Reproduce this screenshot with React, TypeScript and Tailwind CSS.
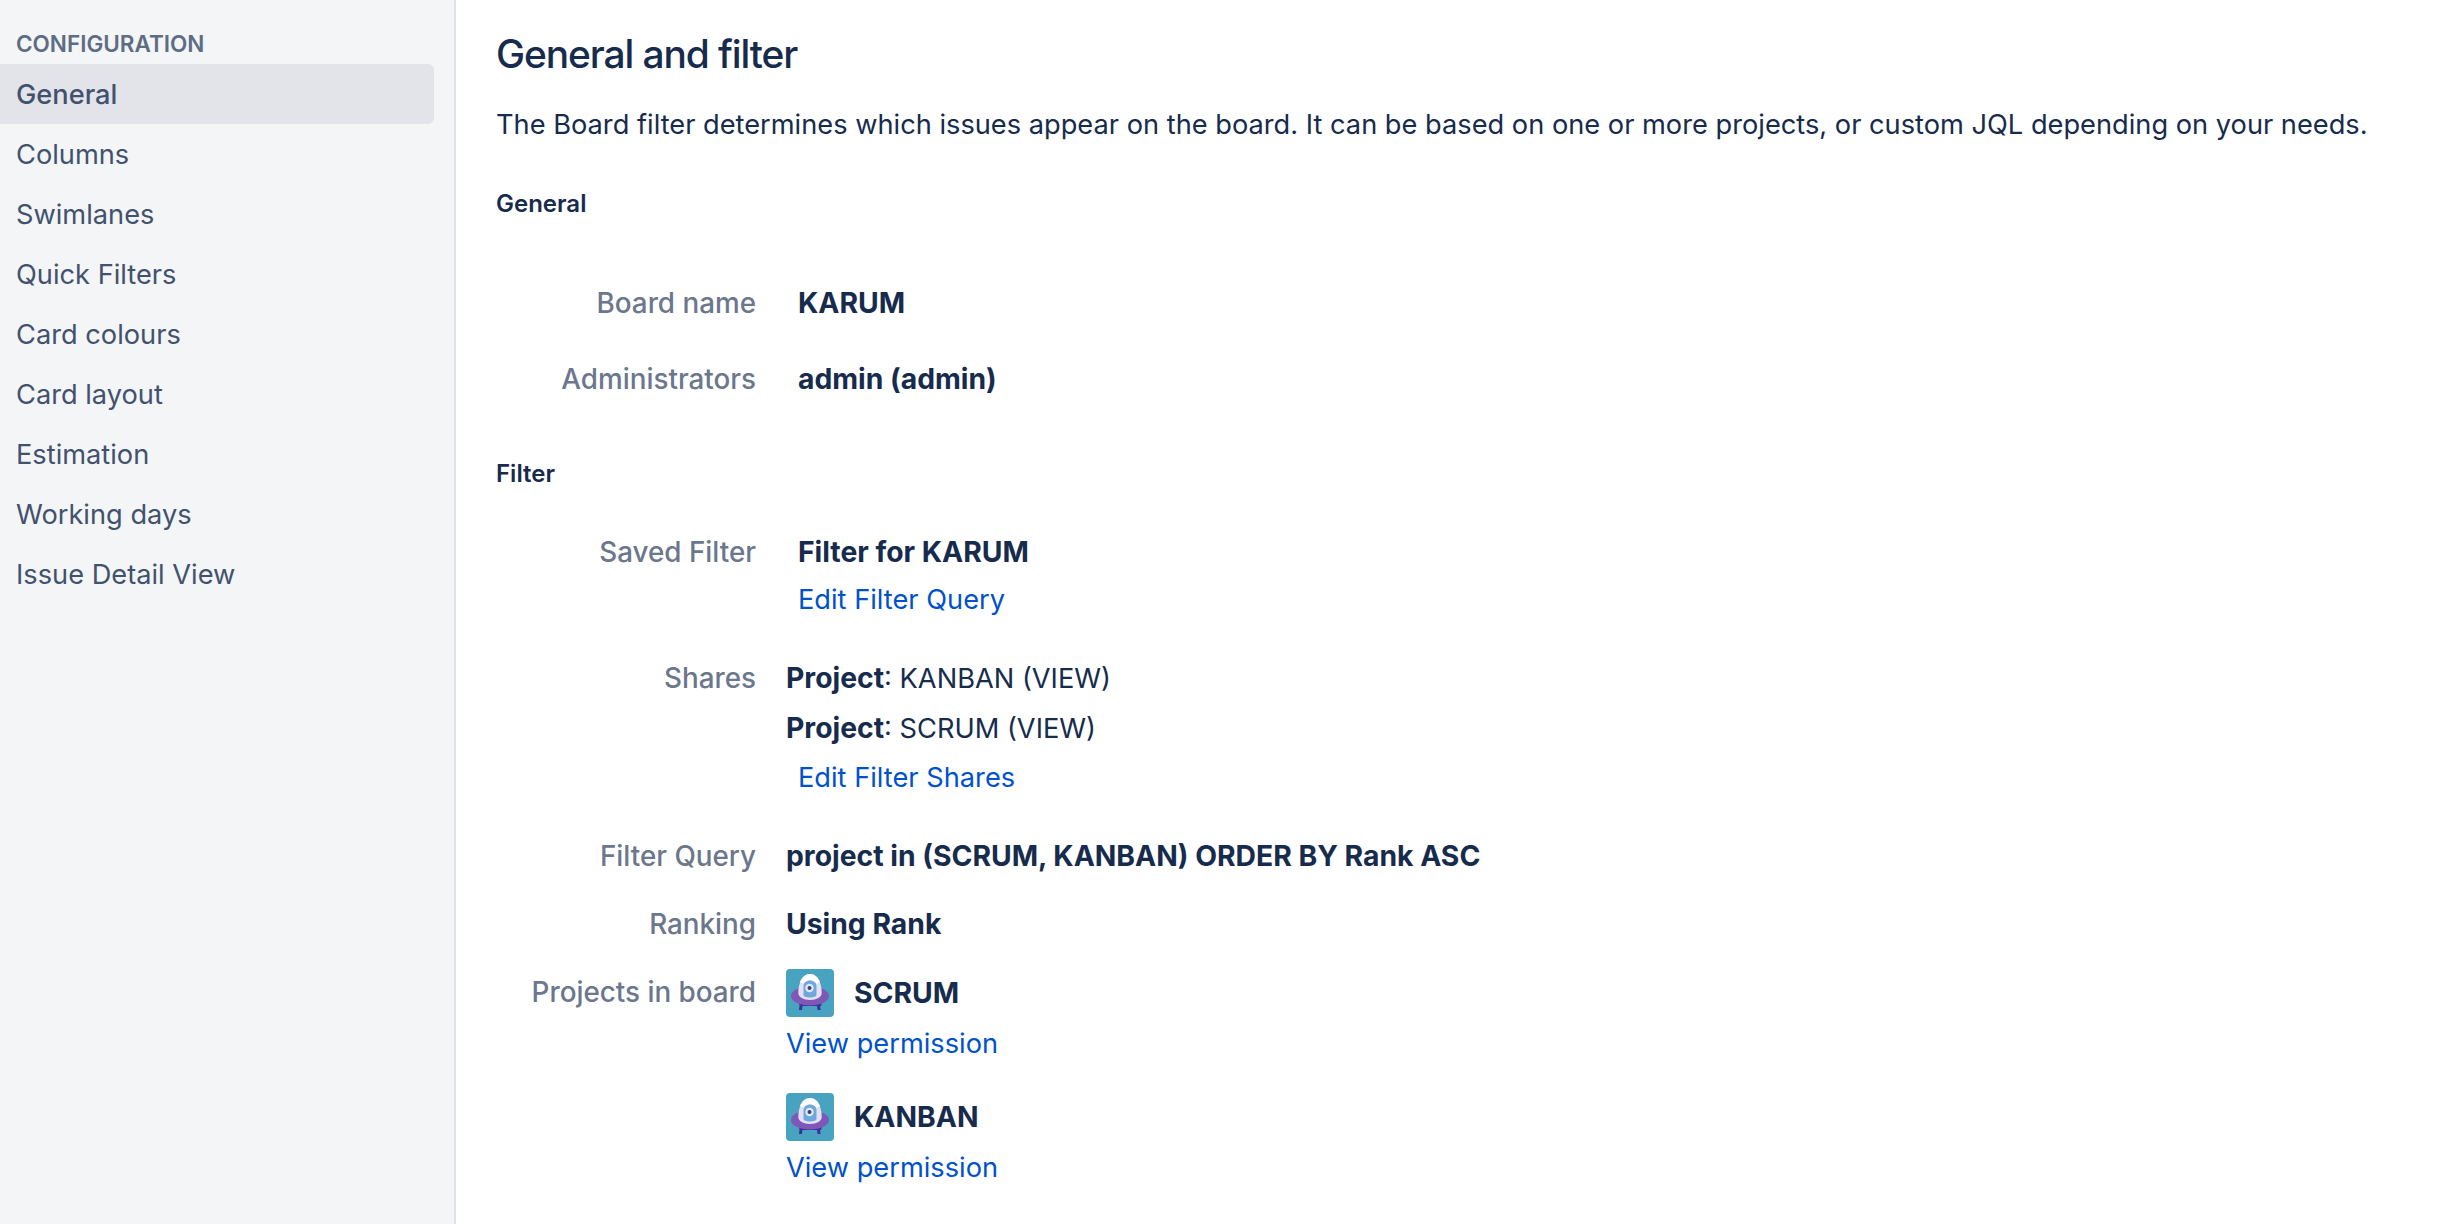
const navItems = ['General', 'Columns', 'Swimlanes', 'Quick Filters', 'Card colours', 'Card layout', 'Estimation', 'Working days', 'Issue Detail View']

function ProjectAvatar() {
  return (
    <svg width="48" height="48" viewBox="0 0 48 48" className="shrink-0">
      <rect width="48" height="48" rx="4" fill="#47A3BF" />
      <path d="M13 34h22l1 0-1 3h-1l.6 4h-3l-.6-4H16.500l-.6 4h-3l.6-4z" fill="#3D2F9E" />
      <ellipse cx="24" cy="27" rx="19" ry="9.500" fill="#7E57B8" />
      <path d="M12.300 24C12.300 13 17 5 24 5s11.700 8 11.700 19c0 4-5 7-11.700 7s-11.700-3-11.700-7z" fill="#E4E0F3" />
      <path d="M14 13c2-5 5.500-8 10-8s8 3 10 8l-4 2H18z" fill="#FFFFFF" />
      <path d="M17.500 26v-9c0-3.200 2.900-5.500 6.500-5.500s6.500 2.300 6.500 5.500v9c0 1.500-2.900 2.500-6.500 2.500s-6.500-1-6.500-2.500z" fill="#6FA8DC" />
      <circle cx="23.500" cy="19" r="4.200" fill="#E4E8F5" />
      <circle cx="23.500" cy="19" r="2" fill="#34427A" />
    </svg>
  )
}

function Row({ label, className, children }: { label: string; className?: string; children: React.ReactNode }) {
  return (
    <div className={`flex ${className ?? ''}`}>
      <div className="w-[260px] shrink-0 text-right text-[27.800px] font-medium text-[#6b778c]">{label}</div>
      {children}
    </div>
  )
}

export default function App() {
  return (
    <div className="flex h-[1224px] w-[2440px] overflow-hidden bg-white font-['Inter',sans-serif] text-[27.220px] leading-[40px] text-[#172b4d] antialiased">
      {/* Sidebar */}
      <aside className="h-full w-[456px] shrink-0 border-r-2 border-[#dfe1e6] bg-[#f4f5f7] pr-5 pt-[30px]">
        <h3 className="pl-4 text-[22.500px] font-semibold leading-7 text-[#5e6c84]">CONFIGURATION</h3>
        <nav className="mt-1.5">
          {navItems.map((item, i) => (
            <div key={item} className={`flex h-[60px] items-center rounded-r-md pl-4 pt-0.5 text-[#42526e] ${i === 0 ? 'bg-[#e2e4e9] font-medium' : ''}`}>
              {item}
            </div>
          ))}
        </nav>
      </aside>

      {/* Main */}
      <main className="min-w-0 flex-1 pl-10 pt-[30px]">
        <h1 className="text-[38.900px] font-medium leading-12 tracking-[-1.100px]">General and filter</h1>
        <p className="mt-[27px] whitespace-nowrap">The Board filter determines which issues appear on the board. It can be based on one or more projects, or custom JQL depending on your needs.</p>

        <h4 className="mt-11 text-[24px] font-semibold leading-[30px]">General</h4>
        <Row label="Board name" className="mt-[64px]">
          <div className="ml-[42px] text-[28.300px] font-bold">KARUM</div>
        </Row>
        <Row label="Administrators" className="mt-9">
          <div className="ml-[42px] text-[28.300px] font-bold">admin (admin)</div>
        </Row>

        <h4 className="mt-[60px] text-[24px] font-semibold leading-[30px]">Filter</h4>
        <Row label="Saved Filter" className="mt-[43px]">
          <div className="ml-[42px]">
            <div className="text-[28.300px] font-bold">Filter for KARUM</div>
            <a className="mt-2 block text-[#0052cc]">Edit Filter Query</a>
          </div>
        </Row>
        <Row label="Shares" className="mt-[38px]">
          <div className="ml-[30px]">
            <div><span className="text-[28.300px] font-bold">Project</span>: KANBAN (VIEW)</div>
            <div className="mt-[9px]"><span className="text-[28.300px] font-bold">Project</span>: SCRUM (VIEW)</div>
            <a className="ml-3 mt-[9px] block text-[#0052cc]">Edit Filter Shares</a>
          </div>
        </Row>
        <Row label="Filter Query" className="mt-[38px]">
          <div className="ml-[30px] text-[28.300px] font-bold">project in (SCRUM, KANBAN) ORDER BY Rank ASC</div>
        </Row>
        <Row label="Ranking" className="mt-7">
          <div className="ml-[30px] text-[28.300px] font-bold">Using Rank</div>
        </Row>
        <Row label="Projects in board" className="mt-7">
          <div className="ml-[30px] -mt-[3px]">
            <div className="flex items-center gap-5 text-[28.300px] font-bold"><ProjectAvatar /><span>SCRUM</span></div>
            <a className="mt-[7px] block text-[#0052cc]">View permission</a>
            <div className="mt-[29px] flex items-center gap-5 text-[28.300px] font-bold"><ProjectAvatar /><span>KANBAN</span></div>
            <a className="mt-[7px] block text-[#0052cc]">View permission</a>
          </div>
        </Row>
      </main>
    </div>
  )
}
